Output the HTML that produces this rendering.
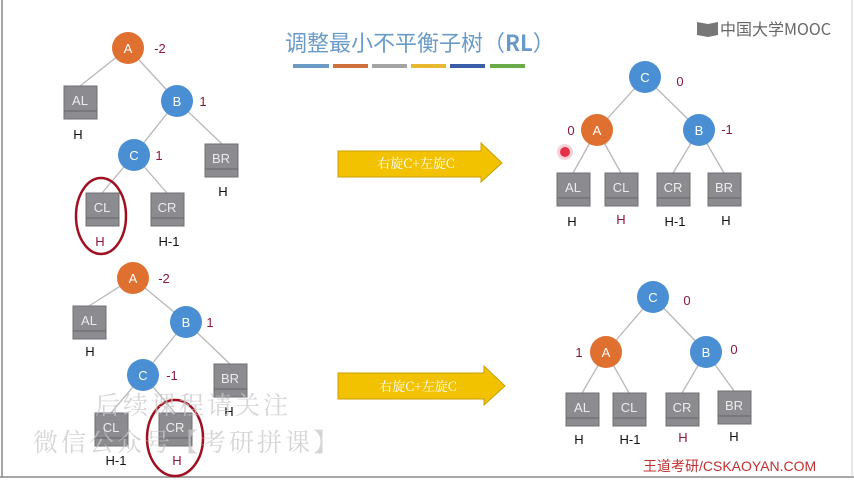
<!DOCTYPE html>
<html><head><meta charset="utf-8"><style>
html,body{margin:0;padding:0;background:#fff;}
svg{display:block;}
text{font-family:"Liberation Sans","Noto Sans CJK SC",sans-serif;}
.n{fill:#fff;font-size:13px;text-anchor:middle;}
.bx{fill:#8b8b90;stroke:#6f6f74;stroke-width:1;}
.bt{fill:#ececec;font-size:13px;text-anchor:middle;}
.h{fill:#111;font-size:13px;text-anchor:middle;}
.r{fill:#8a1a3a;font-size:13px;text-anchor:middle;}
.e{stroke:#b8b8b8;stroke-width:1.3;}
</style></head><body>
<svg width="854" height="480" viewBox="0 0 854 480" xmlns="http://www.w3.org/2000/svg">
<rect x="0" y="0" width="854" height="480" fill="#fff"/>
<line x1="2" y1="0" x2="2" y2="477" stroke="#8a8a8a" stroke-width="1.5"/>
<line x1="0" y1="477" x2="854" y2="477" stroke="#8a8a8a" stroke-width="1.5"/>
<line x1="852" y1="0" x2="852" y2="477" stroke="#cfcfcf" stroke-width="1"/>

<text x="285" y="51" font-size="22" fill="#6a9bc8" style="font-family:'Noto Sans CJK SC',sans-serif">调整最小不平衡子树（<tspan font-weight="bold">RL</tspan>）</text>
<rect x="293" y="64" width="36" height="4" fill="#6b9ac4"/>
<rect x="333" y="64" width="35" height="4" fill="#d0703c"/>
<rect x="372" y="64" width="35" height="4" fill="#a4a4a4"/>
<rect x="411" y="64" width="35" height="4" fill="#e8b830"/>
<rect x="450" y="64" width="35" height="4" fill="#3b5ea8"/>
<rect x="490" y="64" width="35" height="4" fill="#6aaa48"/>

<polygon points="697,22 708,24 718,22 718,35 708,37 697,35" fill="#777"/>
<text x="720" y="35" font-size="16" fill="#666" style="font-family:'Noto Sans CJK SC',sans-serif">中国大学MOOC</text>

<g>
<line class="e" x1="128" y1="48" x2="80" y2="86"/><line class="e" x1="128" y1="48" x2="177" y2="101"/>
<line class="e" x1="177" y1="101" x2="134" y2="155"/><line class="e" x1="177" y1="101" x2="222" y2="144"/>
<line class="e" x1="134" y1="155" x2="102" y2="193"/><line class="e" x1="134" y1="155" x2="167" y2="193"/>
<circle cx="128" cy="48" r="16" fill="#e07030"/><text class="n" x="128" y="53">A</text><text class="r" x="160" y="53">-2</text>
<circle cx="177" cy="101" r="16" fill="#4a8fd4"/><text class="n" x="177" y="106">B</text><text class="r" x="203" y="106">1</text>
<circle cx="134" cy="155" r="16" fill="#4a8fd4"/><text class="n" x="134" y="160">C</text><text class="r" x="159" y="160">1</text>
<rect class="bx" x="64" y="86" width="33" height="33"/><line x1="64" y1="111" x2="97" y2="111" stroke="#666"/><text class="bt" x="80" y="105">AL</text><text class="h" x="78" y="139">H</text>
<rect class="bx" x="205" y="144" width="33" height="33"/><line x1="205" y1="169" x2="238" y2="169" stroke="#666"/><text class="bt" x="221" y="163">BR</text><text class="h" x="223" y="196">H</text>
<rect class="bx" x="86" y="193" width="33" height="33"/><line x1="86" y1="218" x2="119" y2="218" stroke="#666"/><text class="bt" x="102" y="212">CL</text><text class="r" x="100" y="246">H</text>
<rect class="bx" x="151" y="193" width="33" height="33"/><line x1="151" y1="218" x2="184" y2="218" stroke="#666"/><text class="bt" x="167" y="212">CR</text><text class="h" x="169" y="246">H-1</text>
<ellipse cx="101" cy="216" rx="25" ry="38" fill="none" stroke="#a01020" stroke-width="2.5"/>
</g>

<polygon points="338,151 481,151 481,143 502,163 481,182 481,177 338,177" fill="#f2c200" stroke="#c9a000"/>
<text x="416" y="168" font-size="13" fill="#fff" text-anchor="middle" style="font-family:'Noto Serif CJK SC',serif">右旋C+左旋C</text>

<g>
<line class="e" x1="645" y1="77" x2="597" y2="130"/><line class="e" x1="645" y1="77" x2="699" y2="130"/>
<line class="e" x1="597" y1="130" x2="573" y2="173"/><line class="e" x1="597" y1="130" x2="621" y2="173"/>
<line class="e" x1="699" y1="130" x2="673" y2="173"/><line class="e" x1="699" y1="130" x2="724" y2="173"/>
<circle cx="645" cy="77" r="16" fill="#4a8fd4"/><text class="n" x="645" y="82">C</text><text class="r" x="680" y="86">0</text>
<circle cx="597" cy="130" r="16" fill="#e07030"/><text class="n" x="597" y="135">A</text><text class="r" x="571" y="135">0</text>
<circle cx="699" cy="130" r="16" fill="#4a8fd4"/><text class="n" x="699" y="135">B</text><text class="r" x="727" y="134">-1</text>
<circle cx="565" cy="152" r="5" fill="#e0203a" opacity="0.9"/><circle cx="565" cy="152" r="8" fill="#e0203a" opacity="0.2"/>
<rect class="bx" x="557" y="173" width="33" height="33"/><line x1="557" y1="198" x2="590" y2="198" stroke="#666"/><text class="bt" x="573" y="192">AL</text><text class="h" x="572" y="226">H</text>
<rect class="bx" x="605" y="173" width="33" height="33"/><line x1="605" y1="198" x2="638" y2="198" stroke="#666"/><text class="bt" x="621" y="192">CL</text><text class="r" x="621" y="224">H</text>
<rect class="bx" x="657" y="173" width="33" height="33"/><line x1="657" y1="198" x2="690" y2="198" stroke="#666"/><text class="bt" x="673" y="192">CR</text><text class="h" x="675" y="226">H-1</text>
<rect class="bx" x="708" y="173" width="33" height="33"/><line x1="708" y1="198" x2="741" y2="198" stroke="#666"/><text class="bt" x="724" y="192">BR</text><text class="h" x="726" y="225">H</text>
</g>

<g>
<line class="e" x1="133" y1="278" x2="89" y2="306"/><line class="e" x1="133" y1="278" x2="186" y2="322"/>
<line class="e" x1="186" y1="322" x2="143" y2="375"/><line class="e" x1="186" y1="322" x2="230" y2="364"/>
<line class="e" x1="143" y1="375" x2="111" y2="413"/><line class="e" x1="143" y1="375" x2="175" y2="413"/>
<circle cx="133" cy="278" r="16" fill="#e07030"/><text class="n" x="133" y="283">A</text><text class="r" x="164" y="283">-2</text>
<circle cx="186" cy="322" r="16" fill="#4a8fd4"/><text class="n" x="186" y="327">B</text><text class="r" x="210" y="327">1</text>
<circle cx="143" cy="375" r="16" fill="#4a8fd4"/><text class="n" x="143" y="380">C</text><text class="r" x="172" y="380">-1</text>
<rect class="bx" x="73" y="306" width="33" height="33"/><line x1="73" y1="331" x2="106" y2="331" stroke="#666"/><text class="bt" x="89" y="325">AL</text><text class="h" x="90" y="356">H</text>
<rect class="bx" x="214" y="364" width="33" height="33"/><line x1="214" y1="389" x2="247" y2="389" stroke="#666"/><text class="bt" x="230" y="383">BR</text><text class="h" x="229" y="416">H</text>
<rect class="bx" x="95" y="413" width="33" height="33"/><line x1="95" y1="438" x2="128" y2="438" stroke="#666"/><text class="bt" x="111" y="432">CL</text><text class="h" x="116" y="465">H-1</text>
<rect class="bx" x="159" y="413" width="33" height="33"/><line x1="159" y1="438" x2="192" y2="438" stroke="#666"/><text class="bt" x="175" y="432">CR</text><text class="r" x="177" y="465">H</text>
<ellipse cx="175" cy="438" rx="28" ry="38" fill="none" stroke="#a01020" stroke-width="2.5"/>
</g>

<text x="95" y="414" font-size="25" fill="#c8c8c8" opacity="0.75" letter-spacing="3" style="font-family:'Noto Serif CJK SC',serif">后续课程请关注</text>
<text x="33" y="451" font-size="25" fill="#c8c8c8" opacity="0.75" letter-spacing="3" style="font-family:'Noto Serif CJK SC',serif">微信公众号【考研拼课】</text>

<polygon points="338,373 484,373 484,366 505,386 484,405 484,399 338,399" fill="#f2c200" stroke="#c9a000"/>
<text x="418" y="391" font-size="13" fill="#fff" text-anchor="middle" style="font-family:'Noto Serif CJK SC',serif">右旋C+左旋C</text>

<g>
<line class="e" x1="653" y1="297" x2="606" y2="352"/><line class="e" x1="653" y1="297" x2="706" y2="352"/>
<line class="e" x1="606" y1="352" x2="582" y2="393"/><line class="e" x1="606" y1="352" x2="629" y2="393"/>
<line class="e" x1="706" y1="352" x2="682" y2="393"/><line class="e" x1="706" y1="352" x2="734" y2="391"/>
<circle cx="653" cy="297" r="16" fill="#4a8fd4"/><text class="n" x="653" y="302">C</text><text class="r" x="687" y="305">0</text>
<circle cx="606" cy="352" r="16" fill="#e07030"/><text class="n" x="606" y="357">A</text><text class="r" x="579" y="357">1</text>
<circle cx="706" cy="352" r="16" fill="#4a8fd4"/><text class="n" x="706" y="357">B</text><text class="r" x="734" y="354">0</text>
<rect class="bx" x="566" y="393" width="33" height="33"/><line x1="566" y1="418" x2="599" y2="418" stroke="#666"/><text class="bt" x="582" y="412">AL</text><text class="h" x="579" y="444">H</text>
<rect class="bx" x="613" y="393" width="33" height="33"/><line x1="613" y1="418" x2="646" y2="418" stroke="#666"/><text class="bt" x="629" y="412">CL</text><text class="h" x="630" y="444">H-1</text>
<rect class="bx" x="666" y="393" width="33" height="33"/><line x1="666" y1="418" x2="699" y2="418" stroke="#666"/><text class="bt" x="682" y="412">CR</text><text class="r" x="683" y="442">H</text>
<rect class="bx" x="718" y="391" width="33" height="33"/><line x1="718" y1="416" x2="751" y2="416" stroke="#666"/><text class="bt" x="734" y="410">BR</text><text class="h" x="734" y="441">H</text>
</g>

<text x="643" y="471" font-size="14" fill="#c03030" style="font-family:'Liberation Sans','Noto Sans CJK SC',sans-serif">王道考研/CSKAOYAN.COM</text>
</svg>
</body></html>
